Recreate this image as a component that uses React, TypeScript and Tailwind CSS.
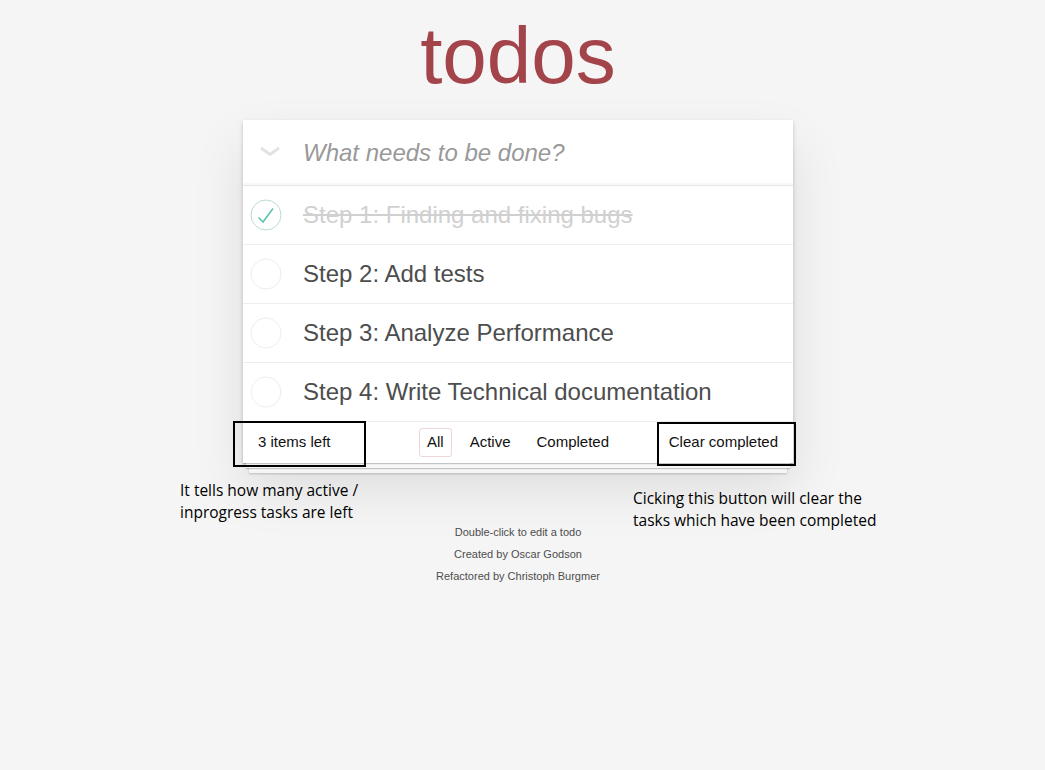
import React from 'react';

const todos = [
  { text: 'Step 1: Finding and fixing bugs', done: true },
  { text: 'Step 2: Add tests', done: false },
  { text: 'Step 3: Analyze Performance', done: false },
  { text: 'Step 4: Write Technical documentation', done: false },
];

const Toggle: React.FC<{ done: boolean }> = ({ done }) => (
  <svg width="32" height="32" viewBox="0 0 32 32" className="shrink-0">
    <circle cx="16" cy="16" r="15" fill="none" stroke={done ? '#bddad5' : '#ededed'} strokeWidth="1" />
    {done && <polyline points="8.5,18.5 13,23 23,9.5" fill="none" stroke="#5dc2af" strokeWidth="1.6" />}
  </svg>
);

const App: React.FC = () => {
  return (
    <div className="min-h-[770px] bg-[#f5f5f5] font-['Liberation_Sans',Arial,sans-serif] text-[#4d4d4d]">
      <div className="relative w-[1036px]">
        <h1 className="pt-4 text-center text-[80px] leading-[80px] text-[#a3434a]">todos</h1>

        <section className="relative mx-auto mt-6 w-[550px] bg-white shadow-[0_2px_4px_0_rgba(0,0,0,0.2),0_25px_50px_0_rgba(0,0,0,0.1)]">
          {/* new todo */}
          <div className="flex h-[65px] items-center shadow-[inset_0_-2px_1px_rgba(0,0,0,0.03)]">
            <div className="flex w-[60px] justify-center pr-[6px] pb-[2px]">
              <svg width="22" height="11" viewBox="0 0 22 11">
                <polyline points="2,2 11,8.5 20,2" fill="none" stroke="#e2e2e2" strokeWidth="3" />
              </svg>
            </div>
            <span className="text-[24px] italic text-[#999]">What needs to be done?</span>
          </div>

          {/* list */}
          <ul className="border-t border-[#e6e6e6]">
            {todos.map((t, i) => (
              <li key={i} className="flex h-[59px] items-center border-b border-[#ededed]">
                <div className="flex w-[60px] pl-[7px]">
                  <Toggle done={t.done} />
                </div>
                <span className={`pb-[2px] text-[24px] leading-[29px] ${t.done ? 'text-[#d0d0d0] line-through' : 'text-[#4d4d4d]'}`}>
                  {t.text}
                </span>
              </li>
            ))}
          </ul>

          {/* footer */}
          <footer className="relative flex h-[41px] items-center px-[15px] text-[15px] text-[#111] shadow-[0_1px_1px_rgba(0,0,0,0.2),0_8px_0_-3px_#f6f6f6,0_9px_1px_-3px_rgba(0,0,0,0.2),0_16px_0_-6px_#f6f6f6,0_17px_2px_-6px_rgba(0,0,0,0.2)]">
            <span>3 items left</span>
            <div className="absolute inset-x-0 top-0 flex h-full items-center justify-center gap-[10px]">
              <span className="rounded-[3px] border border-[rgba(175,47,47,0.2)] px-[7px] py-[2px]">All</span>
              <span className="rounded-[3px] border border-transparent px-[7px] py-[2px]">Active</span>
              <span className="rounded-[3px] border border-transparent px-[7px] py-[2px]">Completed</span>
            </div>
            <span className="relative ml-auto">Clear completed</span>

            <div className="absolute left-[-10px] top-[-1px] h-[46px] w-[133px] border-2 border-black" />
            <div className="absolute left-[414px] top-0 h-[44px] w-[139px] border-2 border-black" />
          </footer>
        </section>

        <div className="absolute left-[180px] top-[479px] font-['Open_Sans',sans-serif] text-[15.5px] leading-[22px] text-black">
          It tells how many active /<br />inprogress tasks are left
        </div>
        <div className="absolute left-[633px] top-[487px] font-['Open_Sans',sans-serif] text-[15.5px] leading-[22px] text-black">
          Cicking this button will clear the<br />tasks which have been completed
        </div>

        <footer className="mt-[58px] text-center text-[11px] leading-[22px] text-[#4d4d4d]">
          <p>Double-click to edit a todo</p>
          <p>Created by Oscar Godson</p>
          <p>Refactored by Christoph Burgmer</p>
        </footer>
      </div>
    </div>
  );
};

export default App;
